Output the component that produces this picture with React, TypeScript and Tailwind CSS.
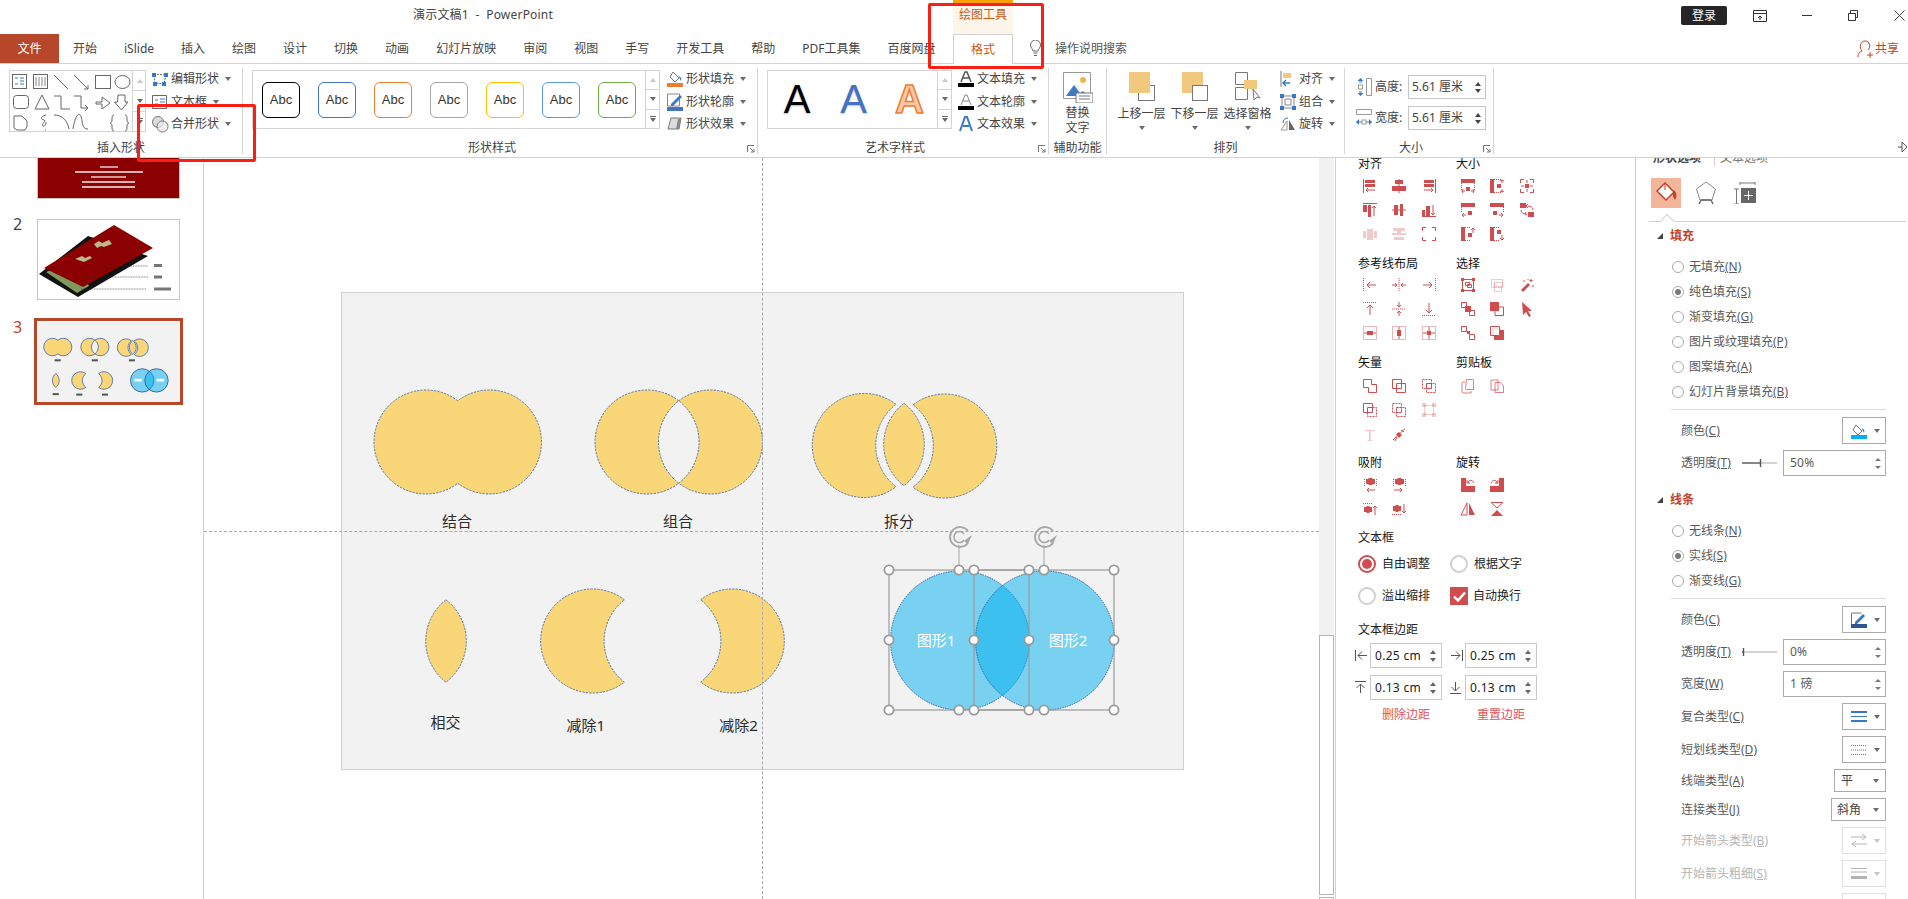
import type { ReactNode } from 'react';

const RED = '#cf4c4f';

// toolbar bits
function Caret({ className = '' }: { className?: string }) {
  return <span className={`inline-block w-0 h-0 border-x-[3px] border-x-transparent border-t-[4px] border-t-[#6b6b6b] ${className}`} />;
}

function Svg({ w, h, children, className = '' }: { w: number; h: number; children: ReactNode; className?: string }) {
  return (
    <svg width={w} height={h} viewBox={`0 0 ${w} ${h}`} className={`shrink-0 ${className}`}>
      {children}
    </svg>
  );
}

function Scroller() {
  return (
    <div className="w-[14px] h-full flex flex-col border-l border-[#d4d4d4] shrink-0">
      <div className="flex-1 flex items-center justify-center border-b border-[#d4d4d4]">
        <span className="w-0 h-0 border-x-[3px] border-x-transparent border-b-[4px] border-b-[#c8c8c8]" />
      </div>
      <div className="flex-1 flex items-center justify-center border-b border-[#d4d4d4]">
        <Caret />
      </div>
      <div className="flex-1 flex flex-col items-center justify-center gap-[1px]">
        <span className="w-[6px] h-[1px] bg-[#6b6b6b]" />
        <Caret />
      </div>
    </div>
  );
}

function SideButton({ icon, text, w = 'w-auto' }: { icon: ReactNode; text: string; w?: string }) {
  return (
    <div className={`flex items-center h-[22.5px] ${w}`}>
      <span className="w-[19px] shrink-0 flex items-center">{icon}</span>
      <span className="text-[12px] leading-none text-[#444] whitespace-nowrap">{text}</span>
      <Caret className="ml-[6px]" />
    </div>
  );
}

function Group({ width, label, launcher, children }: { width: string; label: string; launcher?: boolean; children: ReactNode }) {
  return (
    <div className={`${width} shrink-0 h-[86px] mt-[4px] border-r border-[#d6d6d6] flex flex-col`}>
      <div className="flex-1 flex min-h-0">{children}</div>
      <div className={`relative h-[16px] -mb-[2px] text-center text-[12px] leading-[16px] text-[#444] ${launcher ? 'pr-[16px]' : ''}`}>
        {label}
        {launcher && (
          <svg width="8" height="8" viewBox="0 0 8 8" className="absolute right-[2px] top-[5px]">
            <path d="M.5 7V.5H7M3 3l4 4M7 4v3H4" fill="none" stroke="#777" />
          </svg>
        )}
      </div>
    </div>
  );
}

function TallButton({ text, icon }: { text: string; icon: ReactNode }) {
  return (
    <div className="w-[53px] flex flex-col items-center">
      <div className="h-[36px] pt-[4px]">{icon}</div>
      <div className="mt-[2px] text-[12px] leading-[16px] text-[#444] whitespace-nowrap">{text}</div>
      <Caret className="mt-[4px]" />
    </div>
  );
}

function SizeInput({ icon, label }: { icon: ReactNode; label: string }) {
  return (
    <div className="flex items-center h-[24px]">
      <span className="w-[19px] shrink-0">{icon}</span>
      <span className="text-[12px] text-[#444] w-[33px] whitespace-nowrap">{label}</span>
      <div className="w-[78px] h-[24px] border border-[#c6c6c6] flex items-center justify-between pl-[3px] pr-[4px]">
        <span className="text-[12px] text-[#444] whitespace-nowrap">5.61 厘米</span>
        <span className="flex flex-col gap-[3px]">
          <span className="w-0 h-0 border-x-[3px] border-x-transparent border-b-[4px] border-b-[#444]" />
          <span className="w-0 h-0 border-x-[3px] border-x-transparent border-t-[4px] border-t-[#444]" />
        </span>
      </div>
    </div>
  );
}

function InsertShapesArt() {
  return (
    <svg width="122" height="62" viewBox="0 0 122 62" className="shrink-0">
      <g fill="none" stroke="#666">
        <rect x="2.5" y="3.5" width="14" height="14" />
        <path d="M5 7h3M10 7h4M10 10h4M10 13h4M5 13h3" stroke="#3b78c2" />
        <rect x="23.5" y="3.5" width="14" height="14" />
        <path d="M26 6v9M29 6v9M32 6v9M35 6v9" stroke="#888" />
        <path d="M44 4l14 14M64 4l14 14M74 18h4v-4" />
        <rect x="85.5" y="4.5" width="15" height="13" />
        <ellipse cx="112.5" cy="11" rx="7.5" ry="6.5" />
        <rect x="3.5" y="24.5" width="15" height="13" rx="3" />
        <path d="M32 24l7 14H25zM44 25h7v13h9M64 25h7v12h7M75 34l3 3-3 3M86 31h6v-5l8 6-8 6v-5h-6zM108 24h7v7h3l-6.500 8-7-8h3z" />
        <path d="M4 45h8l5 5v6l-2 3H7l-3-2zM36 44c-5 1-6 4-2 5 3 1-3 4-1 6 2 1 3-2 3-4M36 59h-1M44 44c7 0 13 4 15 14M63 58c3-18 8-18 9-8 1 7 3 8 6 8M104 44c-2 0-2 2-2 5s-2 3-2 3c0 0 2 0 2 3s0 5 2 5M115 44c2 0 2 2 2 5s2 3 2 3c0 0-2 0-2 3s0 5-2 5" />
      </g>
    </svg>
  );
}

// slide drawing
const RAD = 52;
const HH = 41.2;
const union = (m: number, c: number) => `M${m} ${c - HH}A${RAD} ${RAD} 0 1 0 ${m} ${c + HH}A${RAD} ${RAD} 0 1 0 ${m} ${c - HH}Z`;
const left = (m: number, c: number) => `M${m} ${c - HH}A${RAD} ${RAD} 0 1 0 ${m} ${c + HH}A${RAD} ${RAD} 0 0 1 ${m} ${c - HH}Z`;
const right = (m: number, c: number) => `M${m} ${c - HH}A${RAD} ${RAD} 0 1 1 ${m} ${c + HH}A${RAD} ${RAD} 0 0 0 ${m} ${c - HH}Z`;
const lens = (m: number, c: number) => `M${m} ${c - HH}A${RAD} ${RAD} 0 0 1 ${m} ${c + HH}A${RAD} ${RAD} 0 0 1 ${m} ${c - HH}Z`;

const yellowShapes = [
  union(457.75, 442),
  left(678.75, 442),
  right(678.75, 442),
  left(896, 445.5),
  lens(904, 444.5),
  right(913, 446),
  lens(446, 641),
  left(624.4, 641),
  right(700.6, 641),
];

const labels: [string, number, number][] = [
  ['结合', 457, 521],
  ['组合', 678, 521],
  ['拆分', 899, 521],
  ['相交', 445.5, 722],
  ['减除1', 585.7, 725],
  ['减除2', 738.5, 725],
];

function Handle({ x, y }: { x: number; y: number }) {
  return <circle cx={x} cy={y} r="4.600" fill="#fff" stroke="#9a9a9a" strokeWidth="1.800" />;
}

function Rotate({ x }: { x: number }) {
  return (
    <g fill="none" stroke="#a6a6a6">
      <path d={`M${x} 545V570`} />
      <path d={`M${x + 9} 543a10 10 0 1 1 0-12`} strokeWidth="1.800" />
      <path d={`M${x + 5} 540a5.500 5.500 0 1 1 0-6`} strokeWidth="1.500" />
      <path d={`M${x + 13} 535l-4 9-4-3z`} fill="#a6a6a6" stroke="none" />
    </g>
  );
}

function SlideArt({ thumb = false }: { thumb?: boolean }) {
  const sw = thumb ? 5 : 0.9;
  const dash = thumb ? undefined : '2.2 1.2';
  return (
    <svg viewBox="342 293 841 476" className="w-full h-full block">
      {yellowShapes.map((d, i) => (
        <path key={i} d={d} fill="#f9d779" stroke="#4a6aa5" strokeWidth={sw} strokeDasharray={dash} />
      ))}
      <g stroke="#2f5597" strokeWidth={sw} strokeDasharray={thumb ? undefined : '1.500 1'}>
        <circle cx="960" cy="640.500" r="69.500" fill="#00b0f0" fillOpacity="0.5" />
        <circle cx="1045" cy="640.500" r="69.500" fill="#00b0f0" fillOpacity="0.5" />
      </g>
      {thumb ? (
        <>
          {labels.map(([t, x, y]) => (
            <rect key={t} x={x - 18} y={y - 6} width="36" height="12" fill="#555" />
          ))}
          <rect x="914" y="631" width="44" height="16" fill="#fff" />
          <rect x="1046" y="631" width="44" height="16" fill="#fff" />
        </>
      ) : (
        <>
          <g fontFamily="'Noto Sans','Noto Sans CJK SC',sans-serif" fontSize="15" textAnchor="middle" dominantBaseline="central" fill="#2b2b2b">
            {labels.map(([t, x, y]) => (
              <text key={t} x={x} y={y}>
                {t}
              </text>
            ))}
            <text x="936" y="640" fill="#fff">图形1</text>
            <text x="1068" y="640" fill="#fff">图形2</text>
          </g>
          <g fill="none" stroke="#9a9a9a" strokeWidth="1.200">
            <rect x="889" y="570" width="140" height="140" />
            <rect x="974" y="570" width="140" height="140" />
          </g>
          <Rotate x={959} />
          <Rotate x={1044} />
          {[889, 959, 1029, 974, 1044, 1114].flatMap((x) => [570, 710].map((y) => <Handle key={`${x}-${y}`} x={x} y={y} />))}
          {[889, 974, 1029, 1114].map((x) => (
            <Handle key={x} x={x} y={640} />
          ))}
        </>
      )}
    </svg>
  );
}

// iSlide panel icons, 14px drawn with rects and hairlines
const r = (x: number, y: number, w: number, h: number, o = 1) => <rect x={x} y={y} width={w} height={h} fill={RED} opacity={o} />;
const l = (d: string, o = 1, dash?: string) => <path d={d} fill="none" stroke={RED} opacity={o} strokeDasharray={dash} />;
const dots = '1 1';
const arrowL = 'M4 12h8M6 10l-2 2 2 2';
const arrowR = 'M2 12h8M8 10l2 2-2 2';

const alignIcons = [
  <>{l('M.5 0v14')}{r(2, 1, 10, 3)}{r(2, 5, 10, 3)}{l('M3 11h9M5 9l-2 2 2 2')}</>,
  <>{l('M7 0v14')}{r(3, 1, 8, 4)}{r(0, 7, 14, 5)}</>,
  <>{l('M13.500 0v14')}{r(2, 1, 10, 3)}{r(2, 5, 10, 3)}{l('M2 11h9M9 9l2 2-2 2')}</>,
  <>{l('M0 .5h14')}{r(0, 2, 4, 7)}{r(5, 2, 3, 12)}{l('M11 13V3M9 5l2-2 2 2')}</>,
  <>{l('M0 7h14')}{r(2, 2, 4, 10)}{r(8, 1, 3, 12)}</>,
  <>{l('M0 13.500h14')}{r(0, 7, 3, 6)}{r(4, 3, 4, 10)}{l('M11 2v10M9 10l2 2 2-2')}</>,
  <>{r(0, 4, 3, 7, 0.3)}{r(4, 2, 6, 11, 0.3)}{r(11, 4, 3, 7, 0.3)}</>,
  <>{r(1, 1, 12, 3, 0.3)}{r(5, 4, 4, 2, 0.3)}{r(0, 6, 14, 2, 0.3)}{r(2, 10, 10, 3, 0.3)}</>,
  <>{l('M.5 4V.5H4M10 .5h3.500V4M.5 10v3.500H4M10 13.500h3.500V10')}</>,
];
const sizeIcons = [
  <>{r(0, 0, 14, 4)}{l('M.5 4v8M13.500 4v8', 1, dots)}{r(5, 8, 4, 4)}{l('M1 12h3M2 10l-1 2 1 2M10 12h3M12 10l1 2-1 2')}</>,
  <>{r(0, 0, 4, 14)}{l('M4 .5h8M4 13.500h8', 1, dots)}{r(7, 5, 4, 4)}{l('M12 1v3M10 2l2-1 2 1M12 10v3M10 12l2 1 2-1')}</>,
  <>{l('M.5 4V.5H4M10 .5h3.500V4M.5 10v3.500H4M10 13.500h3.500V10')}{r(5, 5, 4, 4)}{l('M7 1v3M7 10v3M1 7h3M10 7h3')}</>,
  <>{r(0, 0, 14, 4)}{l('M.5 4v6', 1, dots)}{r(7, 8, 4, 4)}{l('M1 12h4M3 10l-2 2 2 2')}</>,
  <>{r(0, 0, 14, 4)}{l('M13.500 4v6', 1, dots)}{r(3, 8, 4, 4)}{l('M9 12h4M11 10l2 2-2 2')}</>,
  <>{r(0, 0, 6, 5)}{r(8, 9, 6, 5)}{l('M1 7c0 3 3 4 5 4M13 7c0-3-3-4-5-4M6 9l-1 2 2 1M8 1L6 3l2 2')}</>,
  <>{r(0, 0, 4, 14)}{l('M4 .5h6M4 13.500h6', 1, dots)}{r(7, 6, 4, 4)}{l('M12 6V1M10 3l2-2 2 2')}</>,
  <>{r(0, 0, 4, 14)}{l('M4 .5h6M4 13.500h6', 1, dots)}{r(7, 3, 4, 4)}{l('M12 8v5M10 11l2 2 2-2')}</>,
];
const guideIcons = [
  <>{l('M.5 0v14', 1, dots)}{l('M4 7h9M7 4L4 7l3 3')}</>,
  <>{l('M7 0v14', 1, dots)}{l('M0 7h5M3 5l2 2-2 2M14 7H9M11 5L9 7l2 2')}</>,
  <>{l('M13.500 0v14', 1, dots)}{l('M1 7h9M7 4l3 3-3 3')}</>,
  <>{l('M0 .5h14', 1, dots)}{l('M7 3v10M4 6l3-3 3 3')}</>,
  <>{l('M0 7h14', 1, dots)}{l('M7 0v5M5 3l2 2 2-2M7 14V9M5 11l2-2 2 2')}</>,
  <>{l('M0 13.500h14', 1, dots)}{l('M7 1v10M4 8l3 3 3-3')}</>,
  <>{l('M.5 .5h13v13h-13z', 0.8, dots)}{r(4, 5, 6, 4)}{l('M1 7h12')}</>,
  <>{l('M.5 .5h13v13h-13z', 0.8, dots)}{r(5, 4, 4, 6)}{l('M7 1v12')}</>,
  <>{l('M.5 .5h13v13h-13z', 0.8, dots)}{r(5, 5, 4, 4)}{l('M7 1v12M1 7h12')}</>,
];
const selectIcons = [
  <>{l('M1.500 1.500h11v11h-11z', 1)}{r(0, 0, 3, 3)}{r(11, 0, 3, 3)}{r(0, 11, 3, 3)}{r(11, 11, 3, 3)}{l('M4.500 4.500h4v3h-4zM6.500 6.500h4v3h-4z')}</>,
  <>{l('M1.500 1.500h11v8h-11zM4.500 4.500h8v4h-8zM4.500 4.500v9h7v-5', 0.3)}</>,
  <>{l('M3 3h2M12 8h2M8 1v1M11 1v3M9.500 2.500h3', 1)}<path d="M1 12l7-7 2 2-7 7z" fill={RED} /></>,
  <>{l('M.5 .5h5v5h-5zM8.500 8.500h5v5h-5z')}{r(4, 4, 6, 6)}</>,
  <>{r(0, 0, 9, 9)}{l('M9 5h4.500v8.500H5V9')}</>,
  <path d="M2 0l10 9H8l3 5-2 1-3-5-3 3z" fill={RED} />,
  <>{l('M.5 .5h5v5h-5zM8.500 8.500h5v5h-5z')}{r(6, 5, 3, 3)}</>,
  <>{l('M.5 .5h9v9h-9z')}{l('M3 3h7v7H3z', 0.3)}<path d="M10 4h4v10H4v-4h6z" fill={RED} /></>,
];
const vectorIcons = [
  <>{l('M.5 .5h8v5h5v8h-8v-5h-5z')}</>,
  <>{l('M.5 .5h9v9h-9zM4.500 4.500h9v9h-9z')}</>,
  <>{l('M.5 .5h9v9h-9zM4.500 4.500h9v9h-9z', 1, '2 1')}{l('M4.500 4.500h5v5h-5z')}</>,
  <>{l('M.5 .5h9v9h-9z')}{l('M4.500 4.500h5v5h-5z')}{l('M9.500 4.500h4v9h-9v-4', 1, '2 1')}</>,
  <>{l('M.5 .5h9v9h-9zM4.500 4.500h9v9h-9z', 1, '2 1')}{l('M4.500 4.500h5v5h-5z', 1, '1 1')}</>,
  <>{l('M2.500 2.500h9v9h-9z', 0.3)}{r(0, 0, 4, 4, 0.3)}{r(10, 0, 4, 4, 0.3)}{r(0, 10, 4, 4, 0.3)}{r(10, 10, 4, 4, 0.3)}</>,
  <text x="7" y="13.500" fontSize="16" textAnchor="middle" fontFamily="'Liberation Serif',serif" fill={RED} opacity="0.35">T</text>,
  <>{l('M1 13c3-2 4-5 6-6s4-4 6-5M3 14l2-4M9 3l3 2')}<path d="M4 7l3-2 3 3-3 3z" fill={RED} /></>,
];
const clipIcons = [
  <>{l('M5.500 .5h6a1 1 0 0 1 1 1v9h-7a1 1 0 0 1-1-1z', 0.7)}{l('M4 3H2a1.500 1.500 0 0 0-1 1v9a1 1 0 0 0 1 1h8v-2', 0.7)}</>,
  <>{l('M1 1h7v10H1z', 0.7)}{l('M5 3.500h5l3.500 3v7H5z', 0.7)}</>,
];
const blob = <path d="M3 1h2l1-1h3l1 1h2v5h-2l-1 1H6L5 6H3z" fill={RED} />;
const snapIcons = [
  <>{blob}{l('M1.500 1v7M13.500 1v7', 1, dots)}{l(arrowL)}</>,
  <>{blob}{l('M1.500 1v7M13.500 1v7', 1, dots)}{l(arrowR)}</>,
  null,
  <><path d="M1 5h2l1-1h2l1 1h2v5H7l-1 1H4l-1-1H1z" fill={RED} />{l('M0 1.500h9', 1, dots)}{l('M12 13V4M10 6l2-2 2 2')}</>,
  <><path d="M1 4h2l1-1h2l1 1h2v5H7l-1 1H4L3 9H1z" fill={RED} />{l('M0 12.500h9', 1, dots)}{l('M12 2v9M10 9l2 2 2-2')}</>,
];
const rotateIcons = [
  <>{r(0, 0, 5, 14)}{r(5, 8, 9, 6)}{l('M7 5c0-3 4-4 6 0M6 2v3h3')}</>,
  <>{r(9, 0, 5, 14)}{r(0, 8, 9, 6)}{l('M7 5c0-3-4-4-6 0M8 2v3H5')}</>,
  null,
  <><path d="M6 1L0 13h6z" fill="none" stroke={RED} /><path d="M8 1l6 12H8z" fill={RED} /></>,
  <><path d="M1 .5h12L7 6z" fill="none" stroke={RED} /><path d="M7 8l6 6H1z" fill={RED} /></>,
];

function IconGrid({ icons }: { icons: ReactNode[] }) {
  return (
    <div className="grid auto-rows-[24px] grid-cols-3 w-[89px]">
      {icons.map((ic, i) => (
        <div key={i} className="flex items-center justify-center">
          {ic && <svg width="14" height="14" viewBox="0 0 14 14" className="overflow-visible">{ic}</svg>}
        </div>
      ))}
    </div>
  );
}

function ToolSection({ titles, left, right, gap = 'mb-[3px]', top = 'mt-[12px]' }: { titles: [string, string]; left: ReactNode[]; right: ReactNode[]; gap?: string; top?: string }) {
  return (
    <div className={`flex ${top}`}>
      <div className="w-[98px]">
        <div className={`h-[12px] pl-[3px] text-[12px] leading-[12px] text-[#111] whitespace-nowrap ${gap}`}>{titles[0]}</div>
        <IconGrid icons={left} />
      </div>
      <div>
        <div className={`h-[12px] pl-[3px] text-[12px] leading-[12px] text-[#111] whitespace-nowrap ${gap}`}>{titles[1]}</div>
        <IconGrid icons={right} />
      </div>
    </div>
  );
}

function MarginInput({ value, icon }: { value: string; icon: ReactNode }) {
  return (
    <div className="flex items-center">
      <span className="w-[15px] flex justify-start">{icon}</span>
      <div className="w-[72px] h-[25px] border border-[#c9c9c9] flex items-center justify-between pl-[4px] pr-[5px]">
        <span className="text-[12px] text-[#222] tracking-[0.3px] whitespace-nowrap">{value}</span>
        <span className="flex flex-col gap-[4px]">
          <span className="w-0 h-0 border-x-[3.500px] border-x-transparent border-b-[4px] border-b-[#666]" />
          <span className="w-0 h-0 border-x-[3.500px] border-x-transparent border-t-[4px] border-t-[#666]" />
        </span>
      </div>
    </div>
  );
}

// format pane
function Label({ t, k, off }: { t: string; k: string; off?: boolean }) {
  return (
    <span className={`text-[12px] leading-none whitespace-nowrap ${off ? 'text-[#b4b4b4]' : 'text-[#5a5a5a]'}`}>
      {t}
      <span className="underline">{k}</span>
    </span>
  );
}

function PaneRadio({ t, k, on }: { t: string; k: string; on?: boolean }) {
  return (
    <div className="h-[25px] flex items-center gap-[5px] pl-[36px]">
      <span className="w-[12px] h-[12px] rounded-full border border-[#ababab] flex items-center justify-center">
        {on && <span className="w-[6px] h-[6px] rounded-full bg-[#7a7a7a]" />}
      </span>
      <Label t={t} k={k} />
    </div>
  );
}

function Row({ t, k, off, h = 'h-[27px]', children }: { t: string; k: string; off?: boolean; h?: string; children: ReactNode }) {
  return (
    <div className={`${h} flex items-center justify-between pl-[45px] pr-[22px]`}>
      <Label t={t} k={k} off={off} />
      {children}
    </div>
  );
}

function Dropdown({ icon, off }: { icon: ReactNode; off?: boolean }) {
  return (
    <div className={`w-[44px] h-full border flex items-center pl-[8px] ${off ? 'border-[#e0e0e0]' : 'border-[#ababab]'}`}>
      <span className="w-[16px] flex">{icon}</span>
      <Caret className={`ml-[7px] border-x-[3.500px] ${off ? 'border-t-[#c4c4c4]' : ''}`} />
    </div>
  );
}

function Spin({ value }: { value: string }) {
  return (
    <div className="w-[103px] h-full border border-[#ababab] flex items-center justify-between pl-[6px] pr-[4px]">
      <span className="text-[12px] text-[#5a5a5a] tracking-[0.2px] whitespace-nowrap">{value}</span>
      <span className="flex flex-col gap-[5px]">
        <span className="w-0 h-0 border-x-[3px] border-x-transparent border-b-[3px] border-b-[#777]" />
        <span className="w-0 h-0 border-x-[3px] border-x-transparent border-t-[3px] border-t-[#777]" />
      </span>
    </div>
  );
}

function Slider({ at }: { at: number }) {
  return (
    <svg width="35" height="10" viewBox="0 0 35 10" className="ml-[7px] mr-[6px]">
      <path d="M0 5h35" stroke="#aaa" />
      <path d={`M0 5h${at}`} stroke="#666" strokeWidth="1.400" />
      <path d={`M${at + 0.5} 1v8`} stroke="#555" strokeWidth="1.400" />
    </svg>
  );
}

function SectionHead({ text, top }: { text: string; top: string }) {
  return (
    <div className={`h-[16px] ${top} flex items-center pl-[21px] gap-[7px]`}>
      <span className="w-0 h-0 border-l-[6px] border-l-transparent border-b-[6px] border-b-[#444]" />
      <span className="text-[12px] font-semibold leading-none text-[#c0432a]">{text}</span>
    </div>
  );
}

const bucketSmall = (
  <Svg w={16} h={16}>
    <path d="M5 2l6 6-4 4-5-5z" fill="none" stroke="#777" />
    <path d="M11 5c2 1 3 3 2 5-1-2-2-3-2-5z" fill="#3b78c2" />
    <rect x="0" y="12" width="16" height="4" fill="#00b0f0" />
  </Svg>
);

export default function App() {
  const tabs = ['开始', 'iSlide', '插入', '绘图', '设计', '切换', '动画', '幻灯片放映', '审阅', '视图', '手写', '开发工具', '帮助', 'PDF工具集', '百度网盘'];
  return (
    <div className="relative w-[1908px] h-[899px] overflow-hidden bg-white flex flex-col font-['Noto_Sans','Noto_Sans_CJK_SC',sans-serif]">
      {/* title bar */}
      <div className="h-[34px] flex shrink-0">
        <div className="w-[953px] flex justify-end pt-[6px] pr-[400px] text-[12px] leading-[18px] text-[#444] whitespace-nowrap">
          <span className="tracking-[0.2px]">演示文稿1 &nbsp;-&nbsp; PowerPoint</span>
        </div>
        <div className="w-[60px] bg-[#fdf5ea] border-t-[5px] border-[#f8a100] text-center text-[12px] leading-[20px] text-[#c55a11]">绘图工具</div>
        <div className="flex-1 flex items-start pt-[6px] pl-[668px]">
          <div className="w-[46px] h-[19px] rounded-[2px] bg-[#252525] text-white text-[12px] leading-[19px] text-center">登录</div>
          <div className="flex items-center h-[19px]">
            <Svg w={14} h={12} className="ml-[26px]"><path d="M.5.5h13v11H.5zM.5 3.500h13M7 10V6M5 8l2-2 2 2" fill="none" stroke="#333" /></Svg>
            <Svg w={10} h={3} className="ml-[35px]"><path d="M0 1.500h10" stroke="#333" /></Svg>
            <Svg w={10} h={11} className="ml-[36px]"><path d="M.5 3.500h7v7h-7zM2.500 3V.5h7v7H8" fill="none" stroke="#333" /></Svg>
            <Svg w={11} h={11} className="ml-[36px]"><path d="M.5.5l10 10M10.500.5l-10 10" stroke="#444" /></Svg>
          </div>
        </div>
      </div>

      {/* tabs */}
      <div className="h-[30px] flex border-b border-[#d2d2d2] shrink-0 text-[12px] text-[#444]">
        <div className="w-[59px] h-[29px] bg-[#b7472a] text-white flex items-center justify-center shrink-0">文件</div>
        <div className="w-[894px] flex pl-[0.5px] shrink-0">
          {tabs.map((t) => (
            <div key={t} className="h-[29px] px-[13.500px] flex items-center whitespace-nowrap">{t}</div>
          ))}
        </div>
        <div className="w-[60px] h-[30px] border-x border-t border-[#d2d2d2] bg-white flex items-center justify-center text-[#c55a11] shrink-0">格式</div>
        <div className="flex items-center h-[29px] ml-[17px] text-[#555]">
          <Svg w={11} h={17} className="mr-[14px]"><path d="M3 11c0-2-2.500-3-2.500-6a5 5 0 0 1 10 0c0 3-2.500 4-2.500 6zM3.500 13h4M4 15.500h3" fill="none" stroke="#666" /></Svg>
          <span>操作说明搜索</span>
        </div>
        <div className="flex-1" />
        <div className="flex items-center h-[29px] pr-[9px] text-[#c0432a]">
          <Svg w={16} h={18} className="mr-[2px]"><path d="M1 17c0-4 2-5 4-6-3-3-2-10 3-10s6 6 3 9M10 15h6M13 12v6" fill="none" stroke="#c0432a" /></Svg>
          <span>共享</span>
        </div>
      </div>

      {/* ribbon */}
      <div className="h-[94px] flex border-b border-[#d2d2d2] shrink-0">
        <Group width="w-[243px]" label="插入形状">
          <div className="ml-[9px] mt-[2px] w-[137px] h-[62px] border border-[#d4d4d4] flex">
            <InsertShapesArt />
            <Scroller />
          </div>
          <div className="ml-[6px] flex flex-col">
            <SideButton text="编辑形状" icon={<Svg w={16} h={16}><path d="M2 3l12 1-2 9-9-1z" fill="none" stroke="#666" strokeDasharray="2 1" /><rect x="0" y="2" width="4" height="4" fill="#3b78c2" /><rect x="12" y="2" width="4" height="4" fill="#3b78c2" /><rect x="10" y="11" width="4" height="4" fill="#3b78c2" /><rect x="1" y="11" width="4" height="4" fill="#3b78c2" /></Svg>} />
            <SideButton text="文本框" icon={<Svg w={16} h={14}><path d="M.5.5h14v13H.5z" fill="none" stroke="#666" /><path d="M3 5h3M3 9h3M8 4h5M8 7h5M8 10h5" stroke="#3b78c2" /></Svg>} />
            <SideButton text="合并形状" icon={<Svg w={17} h={17}><circle cx="6" cy="6" r="5.500" fill="#ddd" stroke="#777" /><circle cx="10.500" cy="10.500" r="5.500" fill="#eee" fillOpacity="0.7" stroke="#777" /></Svg>} />
          </div>
        </Group>

        <Group width="w-[515px]" label="形状样式" launcher>
          <div className="ml-[9px] mt-[2px] w-[408px] h-[59px] border border-[#d4d4d4] flex">
            <div className="flex-1 flex gap-[18px] pl-[9px] pt-[11px]">
              {['border-black', 'border-[#4472c4]', 'border-[#ed7d31]', 'border-[#a5a5a5]', 'border-[#ffc000]', 'border-[#5b9bd5]', 'border-[#70ad47]'].map((c) => (
                <div key={c} className={`w-[38px] h-[36px] border-[1.500px] ${c} rounded-[6px] flex items-center justify-center text-[13px] text-[#333] font-['Liberation_Sans',sans-serif]`}>Abc</div>
              ))}
            </div>
            <Scroller />
          </div>
          <div className="ml-[7px] flex flex-col">
            <SideButton text="形状填充" icon={<Svg w={16} h={16}><path d="M6 1l6 6-4 4-5-5z" fill="none" stroke="#777" /><path d="M12 5c2 1 3 3 2 5-1-2-2-3-2-5z" fill="#3b78c2" /><rect x="0" y="12" width="16" height="4" fill="#ed7d31" /></Svg>} />
            <SideButton text="形状轮廓" icon={<Svg w={16} h={18}><path d="M.5 1h12v12H.5z" fill="none" stroke="#888" /><path d="M4 11l9-9 2 2-9 9H4z" fill="#3b78c2" /><rect x="0" y="14" width="16" height="4" fill="#4472c4" /></Svg>} />
            <SideButton text="形状效果" icon={<Svg w={16} h={16}><path d="M4 2h10L12 13H1z" fill="#ddd" stroke="#777" /><path d="M11 3h3l-2 10H9z" fill="#888" /></Svg>} />
          </div>
        </Group>

        <Group width="w-[291px]" label="艺术字样式" launcher>
          <div className="ml-[9px] mt-[2px] w-[185px] h-[59px] border border-[#d4d4d4] flex">
            <div className="flex-1 flex items-center font-['Liberation_Sans',sans-serif] text-[40px] leading-none pb-[1px]">
              <span className="w-[57px] pl-[1px] text-center text-black [text-shadow:0_1px_2px_rgba(0,0,0,0.3)]">A</span>
              <span className="w-[57px] text-center text-[#4472c4] [text-shadow:0_1px_2px_rgba(0,0,0,0.25)]">A</span>
              <span className="w-[55px] text-center text-[#f8c8a8] font-bold [-webkit-text-stroke:1.500px_#ed7d31]">A</span>
            </div>
            <Scroller />
          </div>
          <div className="ml-[6px] flex flex-col">
            <SideButton text="文本填充" icon={<Svg w={16} h={16}><path d="M3 11L7 1h2l4 10M5 7h6" fill="none" stroke="#555" strokeWidth="1.500" /><rect y="12" width="16" height="4" fill="#000" /></Svg>} />
            <SideButton text="文本轮廓" icon={<Svg w={16} h={16}><path d="M3 11L7 1h2l4 10M5 7h6" fill="none" stroke="#888" /><rect y="12" width="16" height="4" fill="#000" /></Svg>} />
            <SideButton text="文本效果" icon={<Svg w={16} h={16}><path d="M2 15L7 1h2l5 14M5 10h6" fill="none" stroke="#3b78c2" strokeWidth="2" /></Svg>} />
          </div>
        </Group>

        <Group width="w-[58px]" label="辅助功能">
          <div className="w-full flex flex-col items-center">
            <Svg w={30} h={31} className="mt-[4px]">
              <path d="M.5.5h27v26H.5z" fill="#fff" stroke="#999" />
              <circle cx="20" cy="8" r="3" fill="#f0b54a" />
              <path d="M3 24l8-11 6 8 3-2 5 5z" fill="#3e7bbf" />
              <rect x="13" y="21" width="17" height="10" fill="#fff" stroke="#777" />
              <path d="M16 24h11M16 27h11" stroke="#777" />
            </Svg>
            <div className="mt-[2px] text-[12px] leading-[15px] text-[#444] text-center">替换<br />文字</div>
          </div>
        </Group>

        <Group width="w-[238px]" label="排列">
          <div className="pl-[8px] flex">
            <TallButton text="上移一层" icon={<Svg w={26} h={30}><rect x="9.500" y="13.500" width="16" height="15" fill="#fff" stroke="#777" /><rect width="21" height="21" fill="#f0c87e" /></Svg>} />
            <TallButton text="下移一层" icon={<Svg w={26} h={30}><rect width="21" height="21" fill="#f0c87e" /><rect x="10.500" y="13.500" width="15" height="15" fill="#fff" stroke="#777" /></Svg>} />
            <TallButton text="选择窗格" icon={<Svg w={26} h={30}><path d="M.5.5h12v12H.5zM.5 15.500h12v12H.5z" fill="#fff" stroke="#777" /><rect x="9" y="8" width="13" height="9" fill="#f0c87e" /><path d="M18 17l1 11 3-3 3 1z" fill="#fff" stroke="#777" /></Svg>} />
          </div>
          <div className="ml-[6px] flex flex-col">
            <SideButton text="对齐" icon={<Svg w={14} h={16}><path d="M1 0v16" stroke="#777" /><rect x="3" y="2" width="8" height="5" fill="#f0c87e" /><path d="M10 12H3M6 9l-3 3 3 3" fill="none" stroke="#3b78c2" strokeWidth="1.400" /></Svg>} />
            <SideButton text="组合" icon={<Svg w={16} h={16}><path d="M2 2h12v12H2z" fill="none" stroke="#888" /><path d="M5 5h6v6H5z" fill="none" stroke="#888" /><rect width="4" height="4" fill="#3b78c2" /><rect x="12" width="4" height="4" fill="#3b78c2" /><rect y="12" width="4" height="4" fill="#3b78c2" /><rect x="12" y="12" width="4" height="4" fill="#3b78c2" /></Svg>} />
            <SideButton text="旋转" icon={<Svg w={16} h={14}><path d="M1 13L7 4v9z" fill="none" stroke="#999" /><path d="M9 3l6 10H9z" fill="#666" /><path d="M3 6c0-3 2-5 5-5" fill="none" stroke="#3b78c2" /></Svg>} />
          </div>
        </Group>

        <Group width="w-[149px]" label="大小" launcher>
          <div className="pl-[11px] pt-[7px] flex flex-col gap-[7px]">
            <SizeInput label="高度:" icon={<Svg w={16} h={18}><path d="M10.500.5h5v17h-5z" fill="none" stroke="#999" /><path d="M3 4h3M3 14h3" stroke="#3b78c2" /><path d="M4.500 0l3 3h-6zM4.500 18l3-3h-6z" fill="#3b78c2" /><rect x="2.500" y="7" width="4" height="4" fill="none" stroke="#999" /></Svg>} />
            <SizeInput label="宽度:" icon={<Svg w={16} h={18}><path d="M.5.5h15v5H.5z" fill="none" stroke="#999" /><path d="M.5 13h15" stroke="#3b78c2" /><path d="M0 13l3-3v6zM16 13l-3-3v6z" fill="#3b78c2" /><rect x="6" y="11" width="4" height="4" fill="#fff" stroke="#999" /></Svg>} />
          </div>
        </Group>

        <div className="flex-1 flex items-end justify-end pb-[4px]">
          <Svg w={10} h={12}><path d="M0 6h4M4 1l5 5-5 5z" fill="none" stroke="#555" /></Svg>
        </div>
      </div>

      {/* main */}
      <div className="flex-1 flex min-h-0">
        {/* thumbnails */}
        <div className="w-[204px] shrink-0 border-r border-[#d2d2d2] overflow-hidden">
          <div className="ml-[37px] w-[143px] h-[41px] bg-[#8b0000] border-x border-b border-[#c6c6c6] flex flex-col items-center pt-[8px] gap-[3.500px]">
            <span className="w-[18px] h-[1.500px] bg-white/60" />
            <span className="w-[68px] h-[1.500px] bg-white/70" />
            <span className="w-[35px] h-[1.500px] bg-white/60" />
            <span className="w-[53px] h-[1.500px] bg-white/70" />
            <span className="w-[53px] h-[1.500px] bg-white/70" />
          </div>
          <div className="flex mt-[20px]">
            <div className="w-[37px] pl-[13px] text-[16px] leading-[10px] text-[#444] pt-0">2</div>
            <div className="w-[143px] h-[81px] border border-[#c6c6c6] bg-white">
              <svg viewBox="0 0 141 79" className="w-full h-full block">
                <path d="M1 54l39 23 70-41-60-20z" fill="#111" />
                <path d="M8 52l31 21 12-7-14-24z" fill="#7f9a5b" />
                <path d="M76 5l39 23-70 39L6 48z" fill="#8b0000" />
                <path d="M56 24l5-3 3 2 7-3 3 4-8 3-3-1-4 2zM37 39l7-3 3 2 5-2 2 2-8 4-3-1z" fill="#b9b98e" />
                <path d="M63 46h47M45 57h65M43 69h65" stroke="#333" strokeWidth="0.600" strokeDasharray="1 0.600" />
                <rect x="116" y="44" width="8" height="3" fill="#777" />
                <rect x="116" y="55.500" width="8" height="3" fill="#777" />
                <rect x="116" y="67.500" width="17" height="3" fill="#777" />
              </svg>
            </div>
          </div>
          <div className="flex mt-[18px]">
            <div className="w-[34px] pl-[13px] text-[16px] leading-[10px] text-[#c0432a] pt-[4px]">3</div>
            <div className="w-[149px] h-[87px] border-[3px] border-[#b7472a] bg-white p-[0.500px]">
              <div className="w-full h-full bg-[#f2f2f2]">
                <SlideArt thumb />
              </div>
            </div>
          </div>
        </div>

        {/* slide canvas */}
        <div className="relative flex-1 min-w-0 bg-white overflow-hidden">
          <div className="ml-[137px] mt-[134px] w-[843px] h-[478px] bg-[#f2f2f2] border border-[#cfcfcf]">
            <SlideArt />
          </div>
          <div className="absolute left-[558px] top-0 bottom-0 border-l border-dashed border-[#a8a8a8]" />
          <div className="absolute left-0 right-0 top-[373px] border-t border-dashed border-[#a8a8a8]" />
        </div>

        {/* scrollbar */}
        <div className="w-[15px] shrink-0 bg-[#f1f1f1] flex flex-col ml-0 mr-[1px]">
          <div className="h-[477px]" />
          <div className="h-[260px] bg-white border border-[#b5b5b5]" />
          <div className="h-[2px] bg-white" />
          <div className="flex-1 bg-white border-x border-t border-[#b5b5b5]" />
        </div>

        {/* tools pane */}
        <div className="w-[301px] shrink-0 border-x border-[#d2d2d2] pl-[19px] overflow-hidden">
          <ToolSection top="mt-0" gap="mb-[4px]" titles={['对齐', '大小']} left={alignIcons} right={sizeIcons} />
          <ToolSection titles={['参考线布局', '选择']} left={guideIcons} right={selectIcons} />
          <ToolSection gap="mb-[5px]" titles={['矢量', '剪贴板']} left={vectorIcons} right={clipIcons} />
          <ToolSection top="mt-[11px]" gap="mb-[4px]" titles={['吸附', '旋转']} left={snapIcons} right={rotateIcons} />

          <div className="mt-[11px] h-[12px] pl-[3px] text-[12px] leading-[12px] text-[#222]">文本框</div>
          <div className="mt-[10px] pl-[3px] grid grid-cols-[92px_1fr] gap-y-[12px] text-[12px] text-[#222]">
            <div className="h-[20px] flex items-center gap-[6px]">
              <span className="w-[18px] h-[18px] rounded-full border-2 border-[#cf4c4f] flex items-center justify-center"><span className="w-[10px] h-[10px] rounded-full bg-[#cf4c4f]" /></span>
              自由调整
            </div>
            <div className="h-[20px] flex items-center gap-[6px]">
              <span className="w-[18px] h-[18px] rounded-full border-2 border-[#cfcfcf]" />
              根据文字
            </div>
            <div className="h-[20px] flex items-center gap-[6px]">
              <span className="w-[18px] h-[18px] rounded-full border-2 border-[#cfcfcf]" />
              溢出缩排
            </div>
            <div className="h-[20px] flex items-center gap-[5px]">
              <span className="w-[18px] h-[18px] bg-[#cf4c4f] flex items-center justify-center">
                <svg width="13" height="11" viewBox="0 0 13 11"><path d="M1 5.500l4 4 7-8" fill="none" stroke="#fff" strokeWidth="2.400" /></svg>
              </span>
              自动换行
            </div>
          </div>
          <div className="mt-[18px] h-[12px] pl-[3px] text-[12px] leading-[12px] text-[#222]">文本框边距</div>
          <div className="mt-[7px] grid grid-cols-[95px_1fr] gap-y-[7px]">
            <MarginInput value="0.25 cm" icon={<Svg w={13} h={11}><path d="M.5 0v11M12 5.500H3M7 1.500l-4 4 4 4" fill="none" stroke="#555" /></Svg>} />
            <MarginInput value="0.25 cm" icon={<Svg w={13} h={11}><path d="M12.500 0v11M1 5.500h9M6 1.500l4 4-4 4" fill="none" stroke="#555" /></Svg>} />
            <MarginInput value="0.13 cm" icon={<Svg w={11} h={13}><path d="M0 .5h11M5.500 12V3M1.500 7l4-4 4 4" fill="none" stroke="#555" /></Svg>} />
            <MarginInput value="0.13 cm" icon={<Svg w={11} h={13}><path d="M0 12.500h11M5.500 1v9M1.500 6l4 4 4-4" fill="none" stroke="#555" /></Svg>} />
          </div>
          <div className="mt-[9px] grid grid-cols-[95px_1fr] text-[12px] leading-[12px] text-[#e0545a]">
            <div className="pl-[15px] w-[87px] text-center">删除边距</div>
            <div className="pl-[15px] w-[87px] text-center">重置边距</div>
          </div>
        </div>

        {/* format pane */}
        <div className="w-[272px] shrink-0 overflow-hidden">
          <div className="h-[8px] overflow-hidden flex pl-[17px] text-[12px] leading-[12px]">
            <span className="-mt-[6px] text-[#444] font-semibold">形状选项</span>
            <span className="-mt-[6px] ml-[13px] pl-[5px] border-l border-[#d2d2d2] text-[#777] h-[18px]">文本选项</span>
          </div>
          <div className="mt-[12px] h-[30px] flex items-center pl-[15px]">
            <div className="w-[30px] h-[30px] bg-[#f4b69b] flex items-center justify-center">
              <svg width="24" height="24" viewBox="0 0 24 24"><path d="M11 2l9 9-8 8-9-9z" fill="#fff" stroke="#c0432a" strokeWidth="1.500" /><path d="M11 2v7" stroke="#c0432a" /><path d="M20 9c3 3 3 7 1 10-2-3-3-5-1-10z" fill="#c0432a" /></svg>
            </div>
            <Svg w={22} h={24} className="ml-[14px]"><path d="M11 1l9.500 7-3.500 11H5L1.500 8z" fill="none" stroke="#888" /><path d="M4 23l2-4M18 23l-2-4M6 19h10" stroke="#666" strokeWidth="1.400" /></Svg>
            <Svg w={22} h={22} className="ml-[17px]"><path d="M6 1h15M6 0v3M21 0v3M0 7h5M0 22h5M2.500 7v15" stroke="#777" fill="none" /><rect x="7" y="6" width="15" height="15" fill="#666" /><path d="M14.500 9v9M10 13.500h9" stroke="#fff" /></Svg>
          </div>
          <div className="relative mt-[13px] ml-[13px] mr-[2px] border-b border-[#d2d2d2]">
            <span className="absolute left-[13px] -top-[5px] w-[10px] h-[10px] rotate-45 bg-white border-l border-t border-[#d2d2d2]" />
          </div>

          <SectionHead text="填充" top="mt-[6px]" />
          <div className="mt-[10.500px]">
            <PaneRadio t="无填充" k="(N)" />
            <PaneRadio t="纯色填充" k="(S)" on />
            <PaneRadio t="渐变填充" k="(G)" />
            <PaneRadio t="图片或纹理填充" k="(P)" />
            <PaneRadio t="图案填充" k="(A)" />
            <PaneRadio t="幻灯片背景填充" k="(B)" />
          </div>
          <div className="mt-[4.500px] ml-[35px] mr-[22px] border-b border-[#dedede]" />
          <div className="mt-[7px] flex flex-col gap-[6px]">
            <Row t="颜色" k="(C)"><Dropdown icon={bucketSmall} /></Row>
            <div className="h-[26px] flex items-center pl-[45px] pr-[22px]">
              <Label t="透明度" k="(T)" />
              <span className="flex-1" />
              <Slider at={18} />
              <Spin value="50%" />
            </div>
          </div>

          <SectionHead text="线条" top="mt-[16px]" />
          <div className="mt-[10.500px]">
            <PaneRadio t="无线条" k="(N)" />
            <PaneRadio t="实线" k="(S)" on />
            <PaneRadio t="渐变线" k="(G)" />
          </div>
          <div className="mt-[4.500px] ml-[35px] mr-[22px] border-b border-[#dedede]" />
          <div className="mt-[7px] flex flex-col gap-[6px]">
            <Row t="颜色" k="(C)">
              <Dropdown icon={<Svg w={16} h={16}><path d="M.5 1h10M.5 1v11" stroke="#777" fill="none" /><path d="M4 10l8-8 2 2-8 8H4z" fill="#3b78c2" /><rect y="12" width="16" height="4" fill="#2f5597" /></Svg>} />
            </Row>
            <div className="h-[26px] flex items-center pl-[45px] pr-[22px]">
              <Label t="透明度" k="(T)" />
              <span className="flex-1" />
              <Slider at={1} />
              <Spin value="0%" />
            </div>
            <Row t="宽度" k="(W)" h="h-[26px]"><Spin value="1 磅" /></Row>
            <Row t="复合类型" k="(C)">
              <Dropdown icon={<Svg w={16} h={11}><path d="M0 1h16M0 10h16" stroke="#3b78c2" strokeWidth="2" /><path d="M0 5.500h16" stroke="#3b78c2" /></Svg>} />
            </Row>
            <Row t="短划线类型" k="(D)">
              <Dropdown icon={<Svg w={16} h={10}><path d="M0 .5h16M0 5h16M0 9.500h16" stroke="#777" strokeDasharray="1 1" /></Svg>} />
            </Row>
            <Row t="线端类型" k="(A)" h="h-[23px]">
              <div className="w-[52px] h-full border border-[#ababab] flex items-center justify-between pl-[6px] pr-[6px] text-[12px] text-[#444]">平<Caret className="border-x-[3.500px]" /></div>
            </Row>
            <Row t="连接类型" k="(J)" h="h-[23px]">
              <div className="w-[55px] h-full border border-[#ababab] flex items-center justify-between pl-[5px] pr-[6px] text-[12px] text-[#444]">斜角<Caret className="border-x-[3.500px]" /></div>
            </Row>
            <Row t="开始箭头类型" k="(B)" off>
              <Dropdown off icon={<Svg w={16} h={15}><path d="M0 4h15M11 1l4 3-4 3M16 11H1M5 8l-4 3 4 3" fill="none" stroke="#b4b4b4" /></Svg>} />
            </Row>
            <Row t="开始箭头粗细" k="(S)" off>
              <Dropdown off icon={<Svg w={16} h={12}><path d="M0 .5h16M0 4h16" stroke="#b4b4b4" /><path d="M0 9.500h16" stroke="#b4b4b4" strokeWidth="3" /></Svg>} />
            </Row>
            <div className="h-[27px] flex justify-end pr-[22px]">
              <div className="w-[44px] h-full border border-[#e0e0e0]" />
            </div>
          </div>
        </div>
      </div>

      {/* red call-outs drawn on the screenshot */}
      <div className="absolute left-[928px] top-[3px] w-[116px] h-[66px] border-[3px] border-[#fb1f13] rounded-[2px]" />
      <div className="absolute left-[137px] top-[104px] w-[119px] h-[58px] border-[3px] border-[#fb1f13] rounded-[2px]" />
    </div>
  );
}
